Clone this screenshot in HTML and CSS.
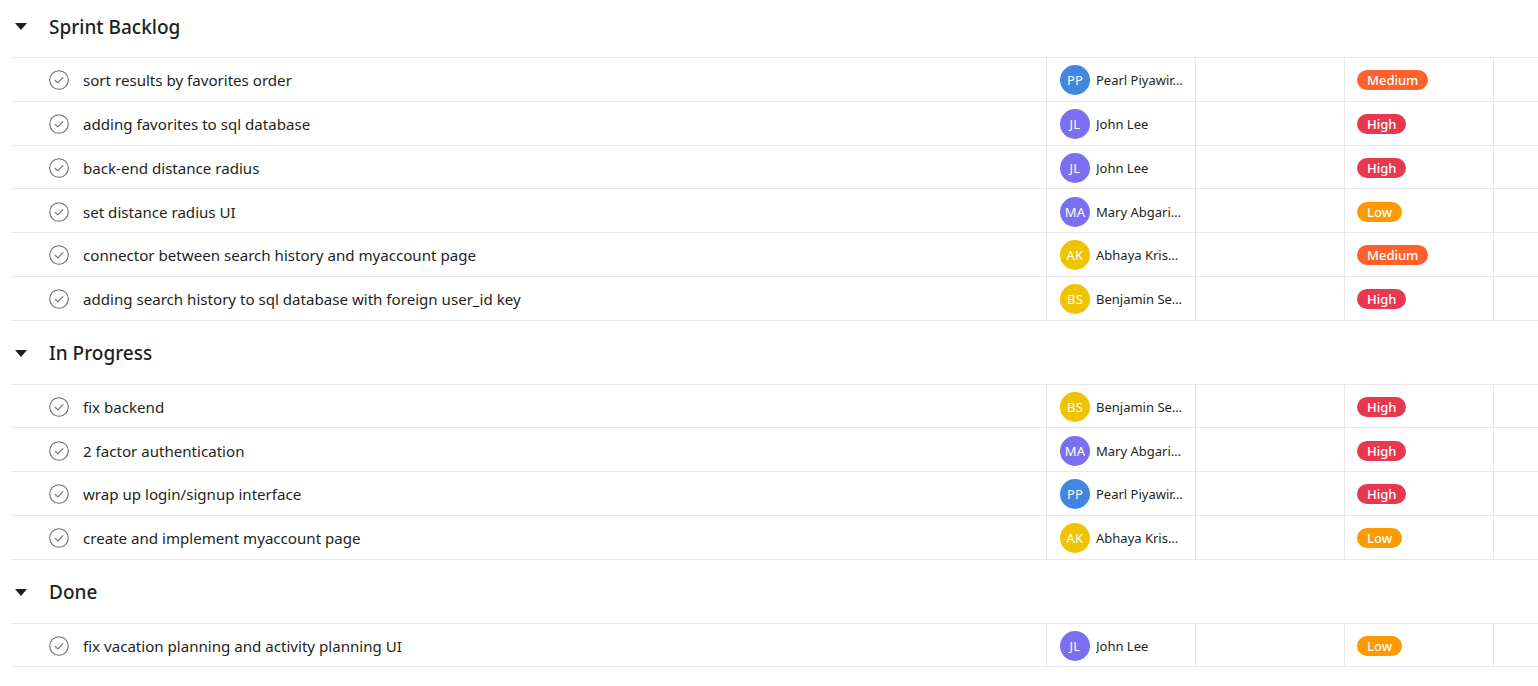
FILE: index.html
```html
<!DOCTYPE html>
<html lang="en">
<head>
<meta charset="utf-8">
<title>Board list</title>
<link rel="stylesheet" href="styles.css">
</head>
<body>
<svg width="0" height="0" class="defs" aria-hidden="true">
  <defs>
    <symbol id="check" viewBox="0 0 20 20">
      <circle cx="10" cy="10" r="9.3" fill="none" stroke="#6d6e6f" stroke-width="1.1"/>
      <path d="M6.2 10.3 L8.9 12.9 L13.9 7.6" fill="none" stroke="#6d6e6f" stroke-width="1.1" stroke-linecap="round" stroke-linejoin="round"/>
    </symbol>
    <symbol id="caret" viewBox="0 0 12 7">
      <path d="M0 0 H12 L6 7 Z" fill="#1e1f21"/>
    </symbol>
  </defs>
</svg>
<main class="list">
  <section class="group">
    <header class="group-head">
      <svg class="caret"><use href="#caret"/></svg>
      <h2 class="group-title">Sprint Backlog</h2>
    </header>
    <div class="rows">
      <div class="row">
        <div class="cell task"><svg class="check"><use href="#check"/></svg><span class="task-name">sort results by favorites order</span></div>
        <div class="cell assignee"><span class="avatar blue">PP</span><span class="name">Pearl Piyawir…</span></div>
        <div class="cell"></div>
        <div class="cell prio"><span class="badge medium">Medium</span></div>
        <div class="cell last"></div>
      </div>
      <div class="row">
        <div class="cell task"><svg class="check"><use href="#check"/></svg><span class="task-name">adding favorites to sql database</span></div>
        <div class="cell assignee"><span class="avatar purple">JL</span><span class="name">John Lee</span></div>
        <div class="cell"></div>
        <div class="cell prio"><span class="badge high">High</span></div>
        <div class="cell last"></div>
      </div>
      <div class="row">
        <div class="cell task"><svg class="check"><use href="#check"/></svg><span class="task-name">back-end distance radius</span></div>
        <div class="cell assignee"><span class="avatar purple">JL</span><span class="name">John Lee</span></div>
        <div class="cell"></div>
        <div class="cell prio"><span class="badge high">High</span></div>
        <div class="cell last"></div>
      </div>
      <div class="row">
        <div class="cell task"><svg class="check"><use href="#check"/></svg><span class="task-name">set distance radius UI</span></div>
        <div class="cell assignee"><span class="avatar purple">MA</span><span class="name">Mary Abgari…</span></div>
        <div class="cell"></div>
        <div class="cell prio"><span class="badge low">Low</span></div>
        <div class="cell last"></div>
      </div>
      <div class="row">
        <div class="cell task"><svg class="check"><use href="#check"/></svg><span class="task-name">connector between search history and myaccount page</span></div>
        <div class="cell assignee"><span class="avatar yellow">AK</span><span class="name">Abhaya Kris…</span></div>
        <div class="cell"></div>
        <div class="cell prio"><span class="badge medium">Medium</span></div>
        <div class="cell last"></div>
      </div>
      <div class="row">
        <div class="cell task"><svg class="check"><use href="#check"/></svg><span class="task-name">adding search history to sql database with foreign user_id key</span></div>
        <div class="cell assignee"><span class="avatar yellow">BS</span><span class="name">Benjamin Se…</span></div>
        <div class="cell"></div>
        <div class="cell prio"><span class="badge high">High</span></div>
        <div class="cell last"></div>
      </div>
    </div>
  </section>

  <section class="group">
    <header class="group-head">
      <svg class="caret"><use href="#caret"/></svg>
      <h2 class="group-title">In Progress</h2>
    </header>
    <div class="rows">
      <div class="row">
        <div class="cell task"><svg class="check"><use href="#check"/></svg><span class="task-name">fix backend</span></div>
        <div class="cell assignee"><span class="avatar yellow">BS</span><span class="name">Benjamin Se…</span></div>
        <div class="cell"></div>
        <div class="cell prio"><span class="badge high">High</span></div>
        <div class="cell last"></div>
      </div>
      <div class="row">
        <div class="cell task"><svg class="check"><use href="#check"/></svg><span class="task-name">2 factor authentication</span></div>
        <div class="cell assignee"><span class="avatar purple">MA</span><span class="name">Mary Abgari…</span></div>
        <div class="cell"></div>
        <div class="cell prio"><span class="badge high">High</span></div>
        <div class="cell last"></div>
      </div>
      <div class="row">
        <div class="cell task"><svg class="check"><use href="#check"/></svg><span class="task-name">wrap up login/signup interface</span></div>
        <div class="cell assignee"><span class="avatar blue">PP</span><span class="name">Pearl Piyawir…</span></div>
        <div class="cell"></div>
        <div class="cell prio"><span class="badge high">High</span></div>
        <div class="cell last"></div>
      </div>
      <div class="row">
        <div class="cell task"><svg class="check"><use href="#check"/></svg><span class="task-name">create and implement myaccount page</span></div>
        <div class="cell assignee"><span class="avatar yellow">AK</span><span class="name">Abhaya Kris…</span></div>
        <div class="cell"></div>
        <div class="cell prio"><span class="badge low">Low</span></div>
        <div class="cell last"></div>
      </div>
    </div>
  </section>

  <section class="group">
    <header class="group-head">
      <svg class="caret"><use href="#caret"/></svg>
      <h2 class="group-title">Done</h2>
    </header>
    <div class="rows">
      <div class="row">
        <div class="cell task"><svg class="check"><use href="#check"/></svg><span class="task-name">fix vacation planning and activity planning UI</span></div>
        <div class="cell assignee"><span class="avatar purple">JL</span><span class="name">John Lee</span></div>
        <div class="cell"></div>
        <div class="cell prio"><span class="badge low">Low</span></div>
        <div class="cell last"></div>
      </div>
    </div>
  </section>
</main>
</body>
</html>
```
FILE: styles.css
```css
* { box-sizing: border-box; }

html, body {
  margin: 0;
  padding: 0;
  background: #ffffff;
  overflow: hidden;
}

body {
  font-family: "Noto Sans", "Open Sans", "Liberation Sans", sans-serif;
  color: #1e1f21;
}

.defs { position: absolute; width: 0; height: 0; }

.list {
  padding-left: 11px;
  width: 1560px;
}

.group + .group { margin-top: 6px; }

.group-head {
  height: 57px;
  display: flex;
  align-items: center;
  padding-left: 4px;
  padding-bottom: 4px;
}

.caret {
  width: 12px;
  height: 7px;
  flex: none;
}

.group-title {
  margin: 0 0 0 22px;
  font-size: 19px;
  font-weight: 500;
  letter-spacing: 0;
}

.rows { border-top: 1px solid #e8e8e9; }

.row {
  display: grid;
  grid-template-columns: 1035px 149px 149px 149px 1fr;
  height: 43.75px;
  border-bottom: 1px solid #e8e8e9;
}

.cell {
  display: flex;
  align-items: center;
  border-left: 1px solid #e8e8e9;
  min-width: 0;
  padding-top: 2px;
}

.cell.task {
  border-left: 0;
  padding-left: 38px;
}

.check {
  width: 20px;
  height: 20px;
  flex: none;
}

.task-name {
  margin-left: 14px;
  font-size: 15.1px;
  white-space: nowrap;
}

.assignee { padding-left: 13px; }

.avatar {
  width: 30px;
  height: 30px;
  border-radius: 50%;
  flex: none;
  display: flex;
  align-items: center;
  justify-content: center;
  color: #ffffff;
  font-size: 13px;
  letter-spacing: 0.2px;
}

.avatar.blue { background: #4186e0; }
.avatar.purple { background: #7a6ff0; }
.avatar.yellow { background: #eec300; }

.name {
  margin-left: 6px;
  font-size: 13px;
  white-space: nowrap;
  overflow: hidden;
  text-overflow: ellipsis;
}

.prio { padding-left: 12px; }

.badge {
  height: 20px;
  border-radius: 10px;
  padding: 0 10px;
  display: inline-flex;
  align-items: center;
  color: #ffffff;
  font-size: 13px;
  font-weight: 500;
}

.badge.medium { background: #fd612c; }
.badge.high { background: #e8384f; }
.badge.low { background: #fd9a00; }
```
